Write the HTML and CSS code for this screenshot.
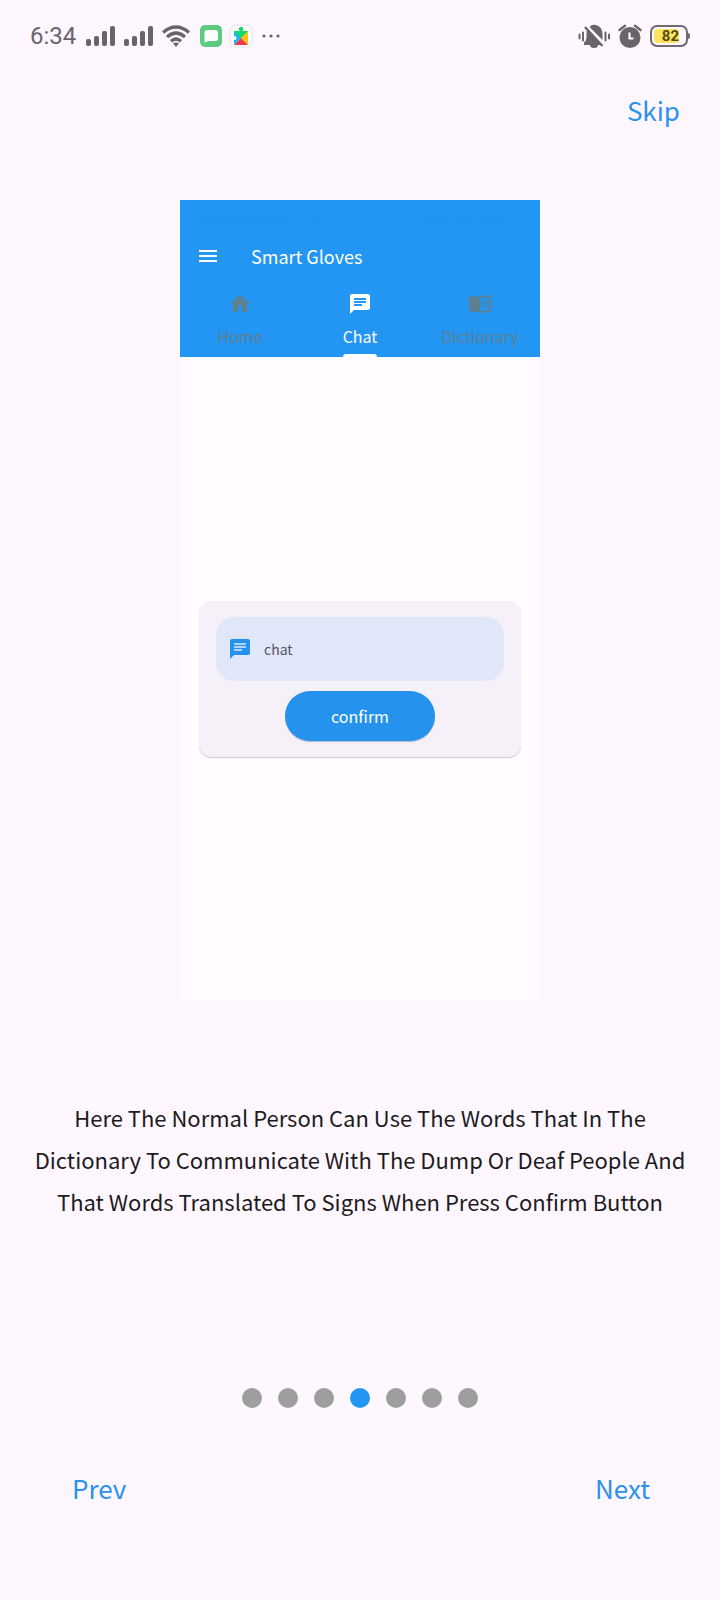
FILE: index.html
```html
<!DOCTYPE html>
<html lang="en">
<head>
<meta charset="utf-8">
<meta name="viewport" content="width=device-width, initial-scale=1">
<title>Smart Gloves</title>
<link rel="stylesheet" href="styles.css">
</head>
<body>
<div class="screen">
  <header class="status">
    <div class="status-group">
      <span class="clock">6:34</span>
      <svg class="signal" width="30" height="20" viewBox="0 0 30 20" fill="currentColor"><rect y="13" width="5" height="7" rx="2"/><rect x="8" y="10" width="5" height="10" rx="2"/><rect x="16" y="5" width="5" height="15" rx="2"/><rect x="24" width="5" height="20" rx="2"/></svg>
      <svg class="signal" width="30" height="20" viewBox="0 0 30 20" fill="currentColor"><rect y="13" width="5" height="7" rx="2"/><rect x="8" y="10" width="5" height="10" rx="2"/><rect x="16" y="5" width="5" height="15" rx="2"/><rect x="24" width="5" height="20" rx="2"/></svg>
      <svg class="wifi" width="28" height="22" viewBox="0 0 28 22" fill="none" stroke="currentColor" stroke-width="3.2"><path d="M1 7.5Q14-3.5 27 7.5"/><path d="M5 12Q14 4 23 12"/><path d="M9 16.3Q14 11.7 19 16.3"/><path d="M11 18.5Q14 16.5 17 18.5L14 22Z" fill="currentColor" stroke="none"/></svg>
      <svg class="app" width="24" height="24" viewBox="0 0 24 24"><rect x="1" y="1" width="22" height="22" rx="5" fill="#5ccb80"/><path d="M8 6h8.500a2.500 2.500 0 0 1 2.500 2.500v6a2.500 2.500 0 0 1-2.500 2.500H9.500L5.500 18.500V8.500A2.500 2.500 0 0 1 8 6Z" fill="#fff"/></svg>
      <svg class="app" width="24" height="24" viewBox="0 0 24 24"><rect x="1" y="1" width="22" height="22" rx="6" fill="#fff" stroke="#e2dfe5"/><path d="M5 7h14v7H5Z" fill="#13d96b"/><circle cx="12" cy="5" r="2.200" fill="#13d96b"/><path d="M5 7l7 7-7 7Z" fill="#13b9f5"/><path d="M19 7v14L12 14Z" fill="#fbc414"/><path d="M5 21 12 14l7 7Z" fill="#e83b4a"/><circle cx="5.500" cy="14" r="2" fill="#fff"/></svg>
      <svg class="more" width="20" height="4" viewBox="0 0 20 4" fill="currentColor"><circle cx="3" cy="2" r="1.600"/><circle cx="10" cy="2" r="1.600"/><circle cx="17" cy="2" r="1.600"/></svg>
    </div>
    <div class="status-group">
      <svg class="bell" width="32" height="24" viewBox="0 0 32 24" fill="currentColor"><path d="M6 21v-2.500q2.500-1.500 2.500-5V9q0-2 .8-4L24 21h-4a4 3 0 0 1-8 0Z"/><path d="M11.500 3Q14-.2 18 1q6.500 2 6.500 9v6Z"/><path d="M7 3 24.500 22" stroke="currentColor" stroke-width="2.400"/><path d="M9.500 2.500 26 20.500" stroke="#fef7ff" stroke-width="1.600"/><path d="M1.500 10.500v4M5 8.500v8M27.500 8.500v8M31 10.500v4" stroke="currentColor" stroke-width="2" stroke-linecap="round"/></svg>
      <svg class="alarm" width="24" height="24" viewBox="0 0 24 24"><circle cx="12" cy="13.500" r="10.500" fill="currentColor"/><path d="M1.500 6 7 1.800M22.500 6 17 1.800" fill="none" stroke="currentColor" stroke-width="2.400" stroke-linecap="round"/><path d="M11.500 8.500v6h4" fill="none" stroke="#fef7ff" stroke-width="2.200"/></svg>
      <span class="battery"><span class="battery-level">82</span></span>
    </div>
  </header>

  <nav class="top-nav"><button class="link" type="button">Skip</button></nav>

  <main class="slide">
    <section class="preview">
      <header class="app-bar">
        <div class="ghost"><span>Personal hotspot : 1 c...</span><span>Used&nbsp; 27.1 MB</span></div>
        <div class="title-row">
          <button class="menu" type="button" aria-label="Menu"><svg width="18" height="12" viewBox="0 0 18 12" fill="currentColor"><path d="M0 0h18v2H0zM0 5h18v2H0zM0 10h18v2H0z"/></svg></button>
          <h1 class="title">Smart Gloves</h1>
        </div>
        <div class="tabs">
          <button class="tab" type="button"><svg width="24" height="24" viewBox="0 0 24 24" fill="currentColor"><path d="M10 20v-6h4v6h5v-8h3L12 3 2 12h3v8z"/></svg><span class="tab-label">Home</span></button>
          <button class="tab active" type="button"><svg width="24" height="24" viewBox="0 0 24 24" fill="currentColor"><path d="M20 2H4c-1.100 0-2 .9-2 2v18l4-4h14c1.100 0 2-.9 2-2V4c0-1.100-.9-2-2-2z"/><path d="M6 7h12M6 10h12M6 13h8" stroke="#2396f3" stroke-width="1.800"/></svg><span class="tab-label">Chat</span></button>
          <button class="tab" type="button"><svg width="24" height="24" viewBox="0 0 24 24" fill="none" stroke="currentColor"><path d="M12 5.500Q7.500 3 2 4.500q-1 .3-1 1.500v13q0 1 1 .8 5-1.200 10 1Z" fill="currentColor" stroke="none"/><path d="M12 5.500Q16.500 3.500 22 5v14.500q-5-1-10 1" stroke-width="2" stroke-linejoin="round"/><path d="M14 9.500q3-1.200 6-.6M14 12.500q3-1.200 6-.6M14 15.500q3-1.200 6-.6" stroke-width="1.300"/></svg><span class="tab-label">Dictionary</span></button>
        </div>
      </header>
      <div class="preview-body">
        <form class="card">
          <label class="field">
            <svg width="24" height="24" viewBox="0 0 24 24" fill="currentColor"><path d="M20 2H4c-1.100 0-2 .9-2 2v18l4-4h14c1.100 0 2-.9 2-2V4c0-1.100-.9-2-2-2z"/><path d="M6 7h12M6 10h12M6 13h8" stroke="#e0e7f9" stroke-width="1.500"/></svg>
            <input class="field-input" type="text" placeholder="chat" aria-label="chat">
          </label>
          <button class="confirm" type="button">confirm</button>
        </form>
      </div>
    </section>
    <p class="caption">Here The Normal Person Can Use The Words That In The Dictionary To Communicate With The Dump Or Deaf People And That Words Translated To Signs When Press Confirm Button</p>
  </main>

  <div class="dots"><span class="dot"></span><span class="dot"></span><span class="dot"></span><span class="dot current"></span><span class="dot"></span><span class="dot"></span><span class="dot"></span></div>
  <footer class="bottom-nav"><button class="link" type="button">Prev</button><button class="link" type="button">Next</button></footer>
</div>
</body>
</html>
```

FILE: styles.css
```css
* { box-sizing: border-box; }
body {
  margin: 0;
  background: #fef7ff;
  color: #1d1b20;
  font-family: "Noto Sans CJK SC", Lato, sans-serif;
}
button {
  padding: 0;
  border: 0;
  background: none;
  color: inherit;
  font: inherit;
}
svg { display: block; flex: none; }
.screen { min-height: 100vh; display: flex; flex-direction: column; }
.status {
  display: flex;
  justify-content: space-between;
  align-items: center;
  height: 72px;
  padding: 0 32px 0 30px;
  color: #69636b;
}
.status-group { display: flex; align-items: center; gap: 8px; }
.clock { margin-right: 2px; font: 400 24px/28px Roboto, sans-serif; }
.app { margin-left: -2px; }
.wifi + .app { margin-left: 1px; }
.battery {
  position: relative;
  width: 38px;
  height: 22px;
  padding: 2px;
  border: 2px solid #6f6973;
  border-radius: 7px;
}
.battery::after {
  content: "";
  position: absolute;
  right: -4px;
  top: 6px;
  width: 2px;
  height: 6px;
  background: #6f6973;
  border-radius: 0 2px 2px 0;
}
.battery-level {
  display: block;
  width: 25px;
  height: 14px;
  border-radius: 3px;
  background: #ffe45e;
  color: #554b16;
  font: 700 15px/14px Roboto, sans-serif;
  text-align: right;
}
.link { color: #2b92ec; font-size: 26px; line-height: 40px; }
.top-nav { display: flex; justify-content: flex-end; height: 128px; padding: 18px 40px 0; align-items: flex-start; }
.slide { display: flex; flex-direction: column; align-items: center; }
.preview {
  display: flex;
  flex-direction: column;
  width: 50%;
  min-width: 360px;
  aspect-ratio: 9 / 20;
  background: #fffbff;
}
.app-bar { background: #2396f3; color: #fff; }
.ghost {
  display: flex;
  justify-content: space-between;
  padding: 12px 40px 0 20px;
  font: 12px/16px Roboto, sans-serif;
  color: #2394f0;
}
.title-row { display: flex; align-items: center; gap: 34px; height: 56px; padding: 0 19px; }
.menu { padding: 4px 0; }
.title { margin: 0; font-size: 18px; line-height: 28px; font-weight: 400; }
.tabs { display: grid; grid-template-columns: repeat(3, 1fr); }
.tab {
  display: flex;
  flex-direction: column;
  align-items: center;
  gap: 8px;
  padding-top: 8px;
  color: #5d7f91;
}
.tab-label { padding-bottom: 9px; font-size: 16px; line-height: 24px; }
.active { color: #fff; }
.active .tab-label { position: relative; }
.active .tab-label::after {
  content: "";
  position: absolute;
  right: 0;
  bottom: 0;
  left: 0;
  height: 3px;
  border-radius: 3px 3px 0 0;
  background: #fff;
}
.preview-body { flex: 1; display: flex; align-items: center; padding: 0 19px; }
.card {
  flex: 1;
  display: flex;
  flex-direction: column;
  align-items: center;
  gap: 10px;
  padding: 16px 17px;
  border-radius: 13px;
  background: #f6f1f9;
  box-shadow: 0 1px 1px #cec8d1;
}
.field {
  display: flex;
  align-items: center;
  gap: 12px;
  width: 100%;
  height: 64px;
  padding: 0 12px;
  border-radius: 18px;
  background: #e0e7f9;
  color: #2592ee;
}
.field-input {
  flex: 1;
  min-width: 0;
  padding: 0;
  border: 0;
  outline: 0;
  background: none;
  color: #54545f;
  font: inherit;
  font-size: 14px;
}
.field-input::placeholder { color: #54545f; opacity: 1; }
.confirm {
  width: 150px;
  height: 50px;
  border-radius: 25px;
  background: #2592ee;
  box-shadow: 0 1px 1px #b3b8cc;
  color: #fff;
  font-size: 16px;
}
.caption {
  margin: 96px 0 0;
  padding: 0 24px;
  font-size: 22px;
  line-height: 42px;
  text-align: center;
}
.dots { display: flex; justify-content: center; gap: 16px; margin-top: 166px; }
.dot { width: 20px; height: 20px; border-radius: 50%; background: #9e9e9e; }
.current { background: #2396f3; }
.bottom-nav { display: flex; justify-content: space-between; padding: 60px 70px 72px 72px; }
```
